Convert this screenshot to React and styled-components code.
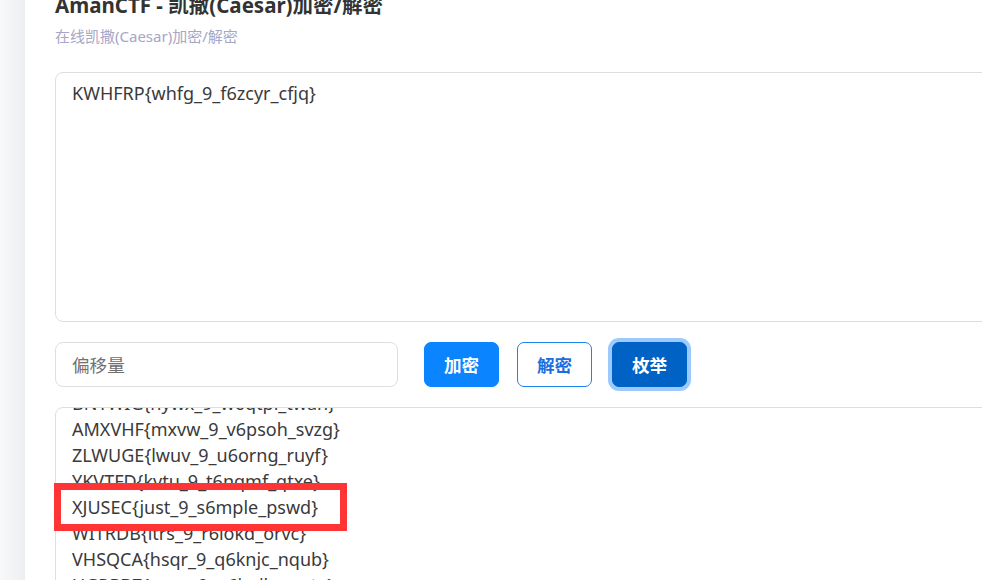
import React, { useEffect, useRef } from "react";
import styled, { createGlobalStyle } from "styled-components";

const GlobalStyle = createGlobalStyle`
  html, body {
    margin: 0;
    padding: 0;
    overflow: hidden;
    background: #ffffff;
  }
  body {
    font-family: "Noto Sans", "Noto Sans CJK SC", sans-serif;
  }
`;

const Page = styled.div`
  display: flex;
  width: 1200px;
  min-height: 580px;
`;

const SideShade = styled.div`
  width: 25px;
  flex-shrink: 0;
  background: linear-gradient(to right, #f8f9fa, #eceef1);
`;

const Card = styled.main`
  flex: 1;
  background: #ffffff;
  padding-left: 30px;
  display: flex;
  flex-direction: column;
  & > * {
    flex-shrink: 0;
  }
`;

const Header = styled.header`
  margin-top: -9px;
`;

const Title = styled.h1`
  margin: 0;
  font-size: 20.5px;
  line-height: 28px;
  font-weight: 700;
  color: #333333;
`;

const Subtitle = styled.p`
  margin: 6px 0 0;
  font-size: 15px;
  line-height: 22px;
  color: #a6a6c6;
`;

const SourceText = styled.textarea`
  margin-top: 25px;
  box-sizing: border-box;
  width: 100%;
  height: 250px;
  border: 1px solid #dedede;
  border-radius: 8px;
  padding: 7px 16px;
  font-family: inherit;
  font-size: 18px;
  line-height: 26px;
  color: #3a3a3a;
  resize: none;
  outline: none;
`;

const Controls = styled.div`
  display: flex;
  align-items: center;
  margin-top: 20px;
  height: 45px;
`;

const ShiftInput = styled.input`
  box-sizing: border-box;
  width: 343px;
  height: 45px;
  border: 1px solid #dedede;
  border-radius: 8px;
  padding: 0 16px;
  font-family: inherit;
  font-size: 17.6px;
  color: #333;
  margin-right: 26px;
  outline: none;
  &::placeholder {
    color: #6f6f6f;
  }
`;

const Button = styled.button`
  box-sizing: border-box;
  width: 75px;
  height: 45px;
  padding: 0;
  margin-right: ${(p) => p.$gap || 18}px;
  border-radius: 7px;
  font-family: inherit;
  font-size: 17.6px;
  font-weight: 700;
  cursor: pointer;
  border: 1px solid ${(p) => (p.$variant === "outline" ? "#1a84f0" : p.$variant === "active" ? "#0062c4" : "#0a84ff")};
  background: ${(p) => (p.$variant === "outline" ? "#ffffff" : p.$variant === "active" ? "#0062c4" : "#0a84ff")};
  color: ${(p) => (p.$variant === "outline" ? "#1a6fe0" : "#ffffff")};
  box-shadow: ${(p) => (p.$variant === "active" ? "0 0 0 4px #9ccaff" : "none")};
`;

const OutputWrap = styled.div`
  position: relative;
  margin-top: 20px;
`;

const Output = styled.div`
  box-sizing: border-box;
  width: 100%;
  height: 300px;
  border: 1px solid #dedede;
  border-radius: 8px;
  padding: 8px 16px;
  overflow-y: auto;
  font-size: 18px;
  line-height: 26px;
  color: #3a3a3a;
`;

const Line = styled.div`
  white-space: nowrap;
`;

const Highlight = styled.div`
  position: absolute;
  left: -1px;
  top: 76px;
  width: 293px;
  height: 48px;
  box-sizing: border-box;
  border: 7px solid #ff3535;
  pointer-events: none;
`;

const cipher = "KWHFRP{whfg_9_f6zcyr_cfjq}";

function shiftText(text, n) {
  return text.replace(/[a-z]/gi, (c) => {
    const base = c <= "Z" ? 65 : 97;
    return String.fromCharCode(((c.charCodeAt(0) - base - n + 26 * 2) % 26) + base);
  });
}

export default function App() {
  const outRef = useRef(null);
  const results = Array.from({ length: 25 }, (_, i) => shiftText(cipher, i + 1));

  useEffect(() => {
    if (outRef.current) outRef.current.scrollTop = 234;
  }, []);

  return (
    <>
      <GlobalStyle />
      <Page>
        <SideShade />
        <Card>
          <Header>
            <Title>AmanCTF - 凯撒(Caesar)加密/解密</Title>
            <Subtitle>在线凯撒(Caesar)加密/解密</Subtitle>
          </Header>
          <SourceText defaultValue={cipher} />
          <Controls>
            <ShiftInput placeholder="偏移量" />
            <Button>加密</Button>
            <Button $variant="outline" $gap={20}>解密</Button>
            <Button $variant="active">枚举</Button>
          </Controls>
          <OutputWrap>
            <Output ref={outRef}>
              {results.map((r, i) => (
                <Line key={i}>{r}</Line>
              ))}
            </Output>
            <Highlight />
          </OutputWrap>
        </Card>
      </Page>
    </>
  );
}
